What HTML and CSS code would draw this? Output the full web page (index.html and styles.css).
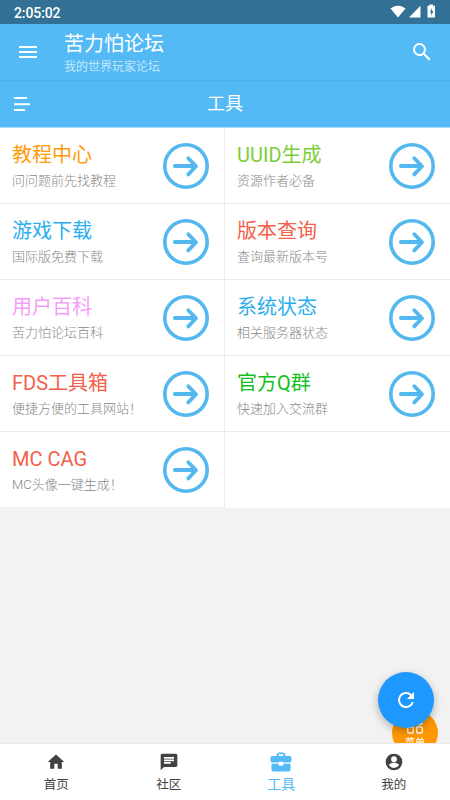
FILE: index.html
```html
<!DOCTYPE html>
<html lang="zh-CN">
<head>
<meta charset="utf-8">
<title>苦力怕论坛</title>
<link rel="stylesheet" href="styles.css">
</head>
<body>
<svg width="0" height="0" class="defs">
  <symbol id="arrow" viewBox="0 0 46 46">
    <circle cx="23" cy="23" r="21.2" fill="none" stroke="currentColor" stroke-width="3.6"/>
    <path d="M11.8 23H32M25.3 15.2L33 23.3L25.3 31.4" fill="none" stroke="currentColor" stroke-width="3.8" stroke-linecap="round" stroke-linejoin="round"/>
  </symbol>
</svg>
<div class="app">
  <div class="status">
    <span class="clock">2:05:02</span>
    <svg class="status-icons" width="48" height="16" viewBox="0 0 48 16" fill="#fff">
      <path d="M0.500 4.600C4.700 .700 11.300 .700 15.500 4.600L8 13.500z"/>
      <path d="M30.500 1.800V13.500H19z"/>
      <path fill-rule="evenodd" d="M39.500 .500h3.500v1.200h2V13.500h-7.500V1.700h2zM41.800 4L39.800 8.500h1.400v3.200l2.200-4.700h-1.600z"/>
    </svg>
  </div>
  <header class="appbar">
    <svg class="menu" width="24" height="24" viewBox="0 0 24 24"><path fill="#fff" d="M3 18h18v-2H3v2zm0-5h18v-2H3v2zm0-7v2h18V6H3z"/></svg>
    <div class="brand">
      <h1>苦力怕论坛</h1>
      <p>我的世界玩家论坛</p>
    </div>
    <svg width="24" height="24" viewBox="0 0 24 24"><path fill="#fff" d="M15.5 14h-.79l-.28-.27A6.471 6.471 0 0 0 16 9.5 6.5 6.5 0 1 0 9.5 16c1.61 0 3.09-.59 4.23-1.57l.27.28v.79l5 4.99L20.49 19l-4.99-5zm-6 0C7.01 14 5 11.99 5 9.5S7.01 5 9.5 5 14 7.01 14 9.5 11.99 14 9.5 14z"/></svg>
  </header>
  <div class="subbar">
    <svg width="16" height="16" viewBox="0 0 16 16"><path fill="#fff" d="M0 1h13v2H0zM0 7.2h16v2H0zM0 13h11v2H0z"/></svg>
    <h2>工具</h2>
  </div>
  <main class="content">
    <div class="grid">
      <div class="cell"><div><h3 class="orange">教程中心</h3><p>问问题前先找教程</p></div><svg class="go"><use href="#arrow"/></svg></div>
      <div class="cell"><div><h3 class="lime">UUID生成</h3><p>资源作者必备</p></div><svg class="go"><use href="#arrow"/></svg></div>
      <div class="cell"><div><h3 class="blue">游戏下载</h3><p>国际版免费下载</p></div><svg class="go"><use href="#arrow"/></svg></div>
      <div class="cell"><div><h3 class="red">版本查询</h3><p>查询最新版本号</p></div><svg class="go"><use href="#arrow"/></svg></div>
      <div class="cell"><div><h3 class="pink">用户百科</h3><p>苦力怕论坛百科</p></div><svg class="go"><use href="#arrow"/></svg></div>
      <div class="cell"><div><h3 class="blue">系统状态</h3><p>相关服务器状态</p></div><svg class="go"><use href="#arrow"/></svg></div>
      <div class="cell"><div><h3 class="red">FDS工具箱</h3><p>便捷方便的工具网站！</p></div><svg class="go"><use href="#arrow"/></svg></div>
      <div class="cell"><div><h3 class="green">官方Q群</h3><p>快速加入交流群</p></div><svg class="go"><use href="#arrow"/></svg></div>
      <div class="cell"><div><h3 class="red">MC CAG</h3><p>MC头像一键生成！</p></div><svg class="go"><use href="#arrow"/></svg></div>
      <div class="cell empty"></div>
    </div>
    <div class="fab-menu">
      <svg width="16" height="16" viewBox="0 0 16 16" fill="none" stroke="#fff" stroke-width="1.3"><rect x=".7" y="1" width="5.6" height="5.6" rx="2"/><rect x="9.7" y="1" width="5.6" height="5.6" rx="2.8"/><rect x=".7" y="9" width="5.6" height="6" rx="1"/><rect x="9.7" y="9" width="5.6" height="6" rx="1"/></svg>
      <span>菜单</span>
    </div>
    <div class="fab">
      <svg width="24" height="24" viewBox="0 0 24 24"><path fill="#fff" d="M17.65 6.35A7.958 7.958 0 0 0 12 4a8 8 0 1 0 7.73 10h-2.08A5.99 5.99 0 0 1 12 18a6 6 0 1 1 0-12c1.66 0 3.14.69 4.22 1.78L13 11h7V4l-2.35 2.35z"/></svg>
    </div>
  </main>
  <nav class="tabs">
    <div class="tab">
      <svg width="20" height="20" viewBox="0 0 24 24"><path fill="currentColor" d="M10 20v-6h4v6h5v-8h3L12 3 2 12h3v8z"/></svg>
      <span>首页</span>
    </div>
    <div class="tab">
      <svg width="20" height="20" viewBox="0 0 24 24"><path fill="currentColor" d="M20 2H4c-1.1 0-1.99.9-1.99 2L2 22l4-4h14c1.1 0 2-.9 2-2V4c0-1.1-.9-2-2-2zM6 9h12v2H6V9zm8 5H6v-2h8v2zm4-6H6V6h12v2z"/></svg>
      <span>社区</span>
    </div>
    <div class="tab active">
      <svg width="22" height="20" viewBox="0 0 22 20"><path fill="currentColor" fill-rule="evenodd" d="M6.500 4V3Q7 .500 9 .500h4q2 0 2.500 2.500V4h4Q21.500 4 21.500 6v2.500Q21.500 10.500 19.500 10.500H13.200V9.800H8.800v.7H2.500Q.5 10.500 .5 8.500V6Q.5 4 2.500 4zM8.600 4h4.800V2.200H8.600zM1.500 11.800H8.800v2h4.400v-2h7.300V17.500Q20.500 19.500 18.500 19.500h-15Q1.500 19.500 1.500 17.500z"/></svg>
      <span>工具</span>
    </div>
    <div class="tab">
      <svg width="20" height="20" viewBox="0 0 24 24"><path fill="currentColor" fill-rule="evenodd" d="M12 2a10 10 0 1 0 0 20 10 10 0 0 0 0-20zm0 3.200a3.500 3.500 0 1 1 0 7 3.500 3.500 0 0 1 0-7zm0 14c-2.500 0-4.710-1.280-6-3.220.03-1.990 4-3.080 6-3.080 1.990 0 5.970 1.090 6 3.080A7.200 7.200 0 0 1 12 19.200z"/></svg>
      <span>我的</span>
    </div>
  </nav>
</div>
</body>
</html>
```
FILE: styles.css
```css
* { box-sizing: border-box; margin: 0; padding: 0; }
body {
  font-family: Roboto, "Noto Sans CJK SC", sans-serif;
  background: #f2f2f2;
}
svg { display: block; flex: none; }
h1, h2, h3 { font-weight: 400; }
.defs { position: absolute; }
.app { width: 450px; height: 800px; display: flex; flex-direction: column; overflow: hidden; }

.status {
  height: 24px; flex: none; background: #327195; color: #fff;
  display: flex; align-items: center; justify-content: space-between;
  padding: 2px 12px 0 14px;
}
.clock { font-size: 14px; font-weight: 500; line-height: 22px; letter-spacing: -.1px; }
.status-icons { margin: -2px 0 0 0; }

.appbar {
  height: 56px; flex: none; background: #54baf5; color: #fff;
  display: flex; align-items: center; padding: 0 16px;
}
.brand { flex: 1; margin-left: 24px; padding-top: 3px; }
.brand h1 { font-size: 20px; line-height: 26px; }
.brand p { font-size: 12px; font-weight: 300; line-height: 18px; opacity: .9; margin-top: 1px; }

.subbar {
  height: 48px; flex: none; background: #54baf5; color: #fff;
  display: grid; grid-template-columns: 16px 1fr 16px; align-items: center;
  padding: 0 14px; border-top: 1px solid #4eb0e8; border-bottom: 1px solid #a9daf8;
}
.subbar h2 { font-size: 18px; line-height: 26px; text-align: center; }

.content { flex: 1; position: relative; overflow: hidden; }
.grid { display: grid; grid-template-columns: 225px 225px; grid-auto-rows: 76px; }
.cell {
  background: #fff; border-bottom: 1px solid #ebebeb;
  display: flex; justify-content: space-between; align-items: flex-start;
  padding: 12px 15px 0 12px;
}
.cell > div { padding-top: 1px; }
.cell:nth-child(odd) { border-right: 1px solid #ebebeb; }
.cell:nth-last-child(-n+2) { border-bottom-color: #f2f2f2; }
.cell.empty { border-bottom-color: #fff; }
.cell h3 { font-size: 20px; line-height: 28px; }
.cell p { font-size: 13px; font-weight: 300; line-height: 20px; color: #888; margin-top: 2px; white-space: nowrap; }
.go { width: 46px; height: 46px; margin-top: 3px; color: #54b8f0; }
.orange { color: #ff9c0a; }
.lime { color: #7dce38; }
.blue { color: #2aaef0; }
.red { color: #f4604a; }
.pink { color: #f39ff8; }
.green { color: #13c121; }

.fab-menu {
  position: absolute; left: 392px; top: 582px; width: 46px; height: 46px;
  border-radius: 50%; background: #ff9800; color: #fff;
  display: flex; flex-direction: column; align-items: center; padding-top: 8px;
}
.fab-menu span { font-size: 10px; line-height: 12px; margin-top: 3px; }
.fab {
  position: absolute; left: 378px; top: 544px; width: 56px; height: 56px;
  border-radius: 50%; background: #1e98ff; box-shadow: 0 3px 8px rgba(0, 0, 0, .28);
  display: flex; align-items: center; justify-content: center;
}

.tabs {
  height: 57px; flex: none; background: #fff; border-top: 1px solid #ebebeb;
  display: grid; grid-template-columns: repeat(4, 1fr);
}
.tab {
  display: flex; flex-direction: column; align-items: center;
  padding-top: 8px; color: #424242; font-size: 12.5px;
}
.tab span { line-height: 18px; margin-top: 4px; }
.tab.active { color: #54baf5; font-size: 14px; }
.tab.active span { margin-top: 3px; }
```
